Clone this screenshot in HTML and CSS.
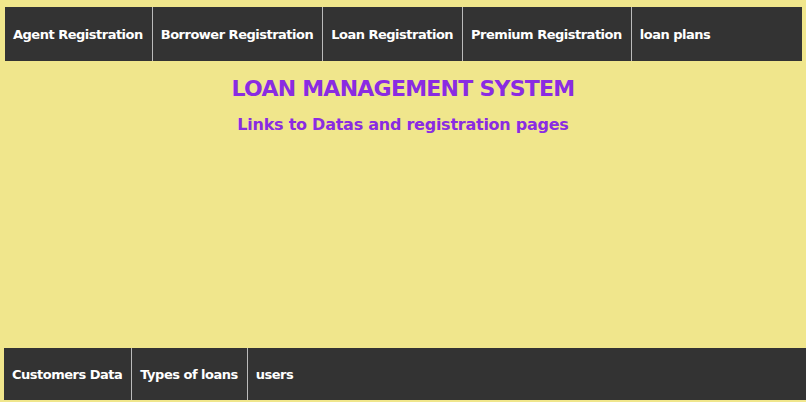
FILE: index.html
```html
<!DOCTYPE html>
<html>
<head>
<meta charset="utf-8">
<link rel="stylesheet" href="styles.css">
</head>
<body>
<nav class="topnav">
  <a class="item" href="#">Agent Registration</a>
  <a class="item" href="#">Borrower Registration</a>
  <a class="item" href="#">Loan Registration</a>
  <a class="item" href="#">Premium Registration</a>
  <a class="item last" href="#">loan plans</a>
</nav>
<main class="content">
  <h1 class="title">LOAN MANAGEMENT SYSTEM</h1>
  <h2 class="subtitle">Links to Datas and registration pages</h2>
</main>
<nav class="bottomnav">
  <a class="item" href="#">Customers Data</a>
  <a class="item" href="#">Types of loans</a>
  <a class="item last" href="#">users</a>
</nav>
</body>
</html>
```
FILE: styles.css
```css
html, body {
  margin: 0;
  padding: 0;
  height: 100%;
}
body {
  background: #f0e68c;
  font-family: "DejaVu Sans", Verdana, sans-serif;
  display: flex;
  flex-direction: column;
}
.topnav, .bottomnav {
  display: flex;
  background: #333333;
}
.topnav {
  height: 54px;
  margin: 7px 4px 0 5px;
}
.bottomnav {
  height: 52px;
  margin: 0 0 2px 4px;
}
.item {
  display: flex;
  align-items: center;
  padding: 0 9px 0 8px;
  color: #ffffff;
  font-weight: bold;
  font-size: 13px;
  letter-spacing: -0.5px;
  text-decoration: none;
  border-right: 1px solid #bbbbbb;
}
.item.last {
  border-right: none;
}
.content {
  flex: 1;
  text-align: center;
  padding-top: 14px;
}
.title {
  margin: 0;
  font-size: 22px;
  letter-spacing: -0.75px;
  color: #8a2be2;
  line-height: 28px;
}
.subtitle {
  margin: 10px 0 0 0;
  font-size: 16px;
  letter-spacing: -0.25px;
  color: #8a2be2;
  line-height: 24px;
}
```
